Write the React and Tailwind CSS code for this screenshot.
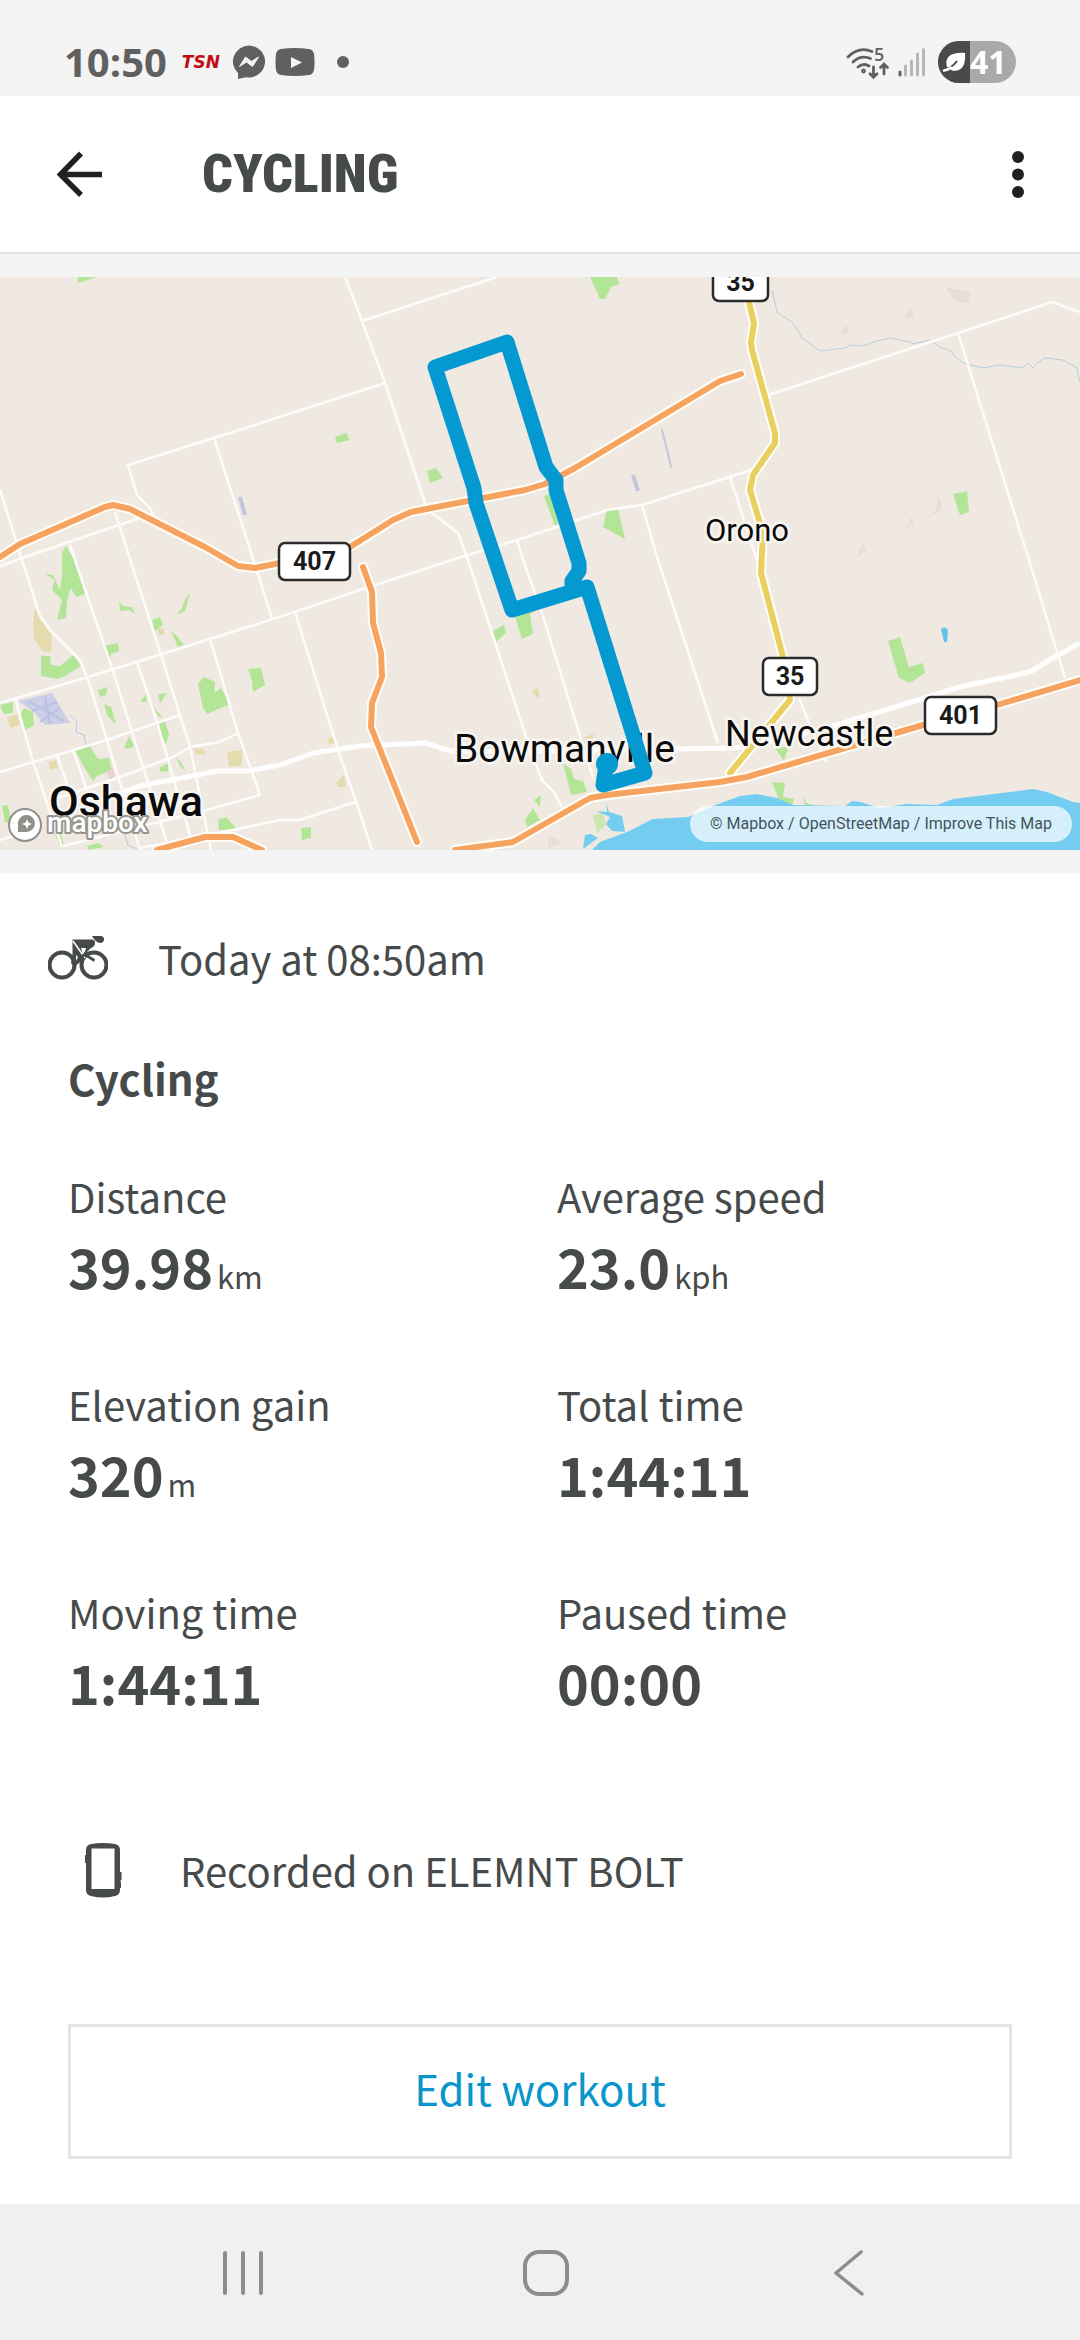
const stats = [
  { label: 'Distance', value: '39.98', unit: 'km' },
  { label: 'Average speed', value: '23.0', unit: 'kph' },
  { label: 'Elevation gain', value: '320', unit: 'm' },
  { label: 'Total time', value: '1:44:11' },
  { label: 'Moving time', value: '1:44:11' },
  { label: 'Paused time', value: '00:00' },
];

// Map data
const parks = [
  '78,277 97,277 78,283',
  '335,437 346,433 350,440 337,443',
  '590,277 617,277 619,284 611,287 605,299 600,299',
  '427,471 436,468 443,478 430,483',
  '544,496 551,494 558,524 555,526',
  '607,510 618,508 625,539 603,527',
  '953,494 967,491 969,512 960,515',
  '62,552 66,546 78,566 85,594 76,597 71,588 67,600 66,618 57,620 62,600 52,590 55,580 45,574 53,575 60,590 62,575',
  '41,656 50,656 51,665 60,666 73,655 81,666 65,676 57,679 41,676',
  '105,646 118,643 119,651 111,654 110,660 106,655',
  '152,620 160,617 163,625 155,631',
  '171,631 177,636 184,645 178,647',
  '190,592 185,600 182,608 177,615 185,611 187,604',
  '119,601 123,606 132,607 135,614 129,610 120,611',
  '248,669 261,668 265,685 253,692 252,681',
  '198,684 204,677 215,682 214,693 221,688 230,704 207,714 203,708',
  '0,705 13,702 13,713 4,714',
  '20,716 24,708 33,712 34,725 24,731',
  '98,690 108,687 106,695 100,697',
  '104,704 111,707 116,724 108,717',
  '140,702 146,694 147,702',
  '158,694 167,693 160,703',
  '150,703 163,718 159,717',
  '158,725 165,721 169,735 166,744 160,735',
  '124,748 129,736 134,746 131,748 127,749',
  '75,750 89,745 98,759 109,758 112,770 97,776 93,781 84,767',
  '159,768 168,763 168,771 161,772',
  '176,757 181,762 186,772 180,766',
  '218,820 226,817 237,829 219,830',
  '301,828 311,827 311,838 302,840',
  '2,806 8,805 12,825 5,822',
  '55,834 60,832 64,845 60,846',
  '87,846 99,843 104,847 89,850',
  '493,631 504,625 506,633 496,642',
  '515,616 538,608 530,614 533,634 522,639',
  '563,763 571,769 574,779 583,781 587,792 571,795',
  '525,820 533,808 540,820 527,827',
  '534,800 541,795 540,807',
  '888,641 900,637 909,667 923,663 925,673 910,683 899,678',
  '775,748 789,746 784,761',
  '772,782 785,783 783,797 794,799 792,806 780,803',
  '803,794 806,803 817,806 805,806',
];

const sand = [
  '35,608 40,618 52,635 51,653 42,651 34,638 33,623',
  '157,628 164,629 164,634 159,636',
  '227,752 242,750 242,765 229,767',
  '193,748 204,749 206,754 197,755',
  '49,762 56,760 58,768 50,770',
  '327,739 335,736 336,743 329,744',
  '336,783 344,775 346,787 338,787',
  '531,692 538,688 540,699',
  '584,737 594,734 592,740 586,740',
  '7,718 17,714 20,725 11,728',
];

const hills = [
  '945,287 970,292 969,303 957,302',
  '903,318 911,307 914,317',
  '841,334 846,324 849,334',
  '926,519 937,509 937,494 942,503 941,510',
  '906,528 911,517 914,523',
  '857,556 863,542 866,552',
  '548,849 549,835 563,843',
];

const minorRoads = [
  '345,277 362,321 385,383 425,503',
  '362,321 497,277',
  '385,383 214,438 128,465 137,495 150,508 154,517',
  '214,438 255,565 272,618',
  '0,490 22,560 40,616 50,630 80,660 88,680 107,740 140,850',
  '0,566 22,558 140,518',
  '115,512 132,565 161,655 190,747 211,850',
  '70,545 75,560 112,668 137,748 167,843',
  '0,703 88,677 162,654 210,639 295,612 360,590 455,559 517,540 607,510 642,505 720,480 757,468',
  '295,612 338,750 360,813 372,850',
  '210,639 238,733 260,795 207,810 63,846',
  '137,662 157,722 190,835',
  '0,772 107,740 180,715',
  '57,755 70,793',
  '15,698 33,762 62,847',
  '73,750 87,790',
  '52,800 117,778 173,757 190,747 220,742 238,733',
  '140,848 233,830 280,820 300,820 355,802',
  '0,840 20,834',
  '425,503 432,513 458,533 468,560 527,740 542,780 555,793 562,808',
  '517,540 523,560 542,613 593,778',
  '642,505 658,560 718,743',
  '768,395 958,333 1052,302 1080,312',
  '958,333 1029,560 1065,678',
  '730,477 757,560',
  '799,698 808,720 826,762',
];

const mainRoads = [
  '100,800 140,786 187,777 217,771 247,771 280,765 313,753 360,746 427,743 440,748 455,752 673,749 735,748 765,743 830,727 960,687 1030,672 1053,658 1080,643',
];

const highways = [
  '0,557 20,544 105,507 113,505 130,509 205,547 238,566 255,568 275,564 350,547 393,520 411,512 525,490 545,484 575,468 720,381 741,374',
  '363,567 372,592 373,623 381,653 382,677 372,703 371,727 417,842',
  '455,850 513,842 590,798 607,795 720,782 747,777 923,725 997,705 1080,680',
  '157,850 205,837 233,837 262,850',
];

const route35 = '746,290 754,323 751,342 752,350 775,433 775,443 753,475 750,490 763,533 761,573 783,657 790,700 730,773';

const creek = '772,290 777,312 793,323 802,338 820,351 846,348 850,345 863,346 877,341 890,338 910,342 913,344 930,340 940,347 952,352 954,356 963,363 983,368 1000,365 1022,368 1028,363 1033,368 1037,363 1045,358 1063,360 1077,368 1080,383';

const lake = '592,850 600,842 627,832 653,819 688,817 713,806 740,796 757,794 777,798 793,805 845,806 852,801 860,802 880,808 907,804 937,805 953,799 1033,789 1047,792 1073,802 1080,803 1080,850';

const track = '609,761 605,772 603,785 645,773 587,587 512,610 476,503 474,488 435,367 507,342 546,467 556,480 556,490 579,563 579,571 572,581 572,590';

const places = [
  { name: 'Oshawa', x: 49, y: 816, size: 43, weight: 500 },
  { name: 'Bowmanville', x: 454, y: 762, size: 39, weight: 400 },
  { name: 'Newcastle', x: 725, y: 746, size: 36, weight: 400 },
  { name: 'Orono', x: 705, y: 541, size: 31, weight: 400 },
];

const shields = [
  { name: '407', x: 279, y: 543, w: 71 },
  { name: '35', x: 713, y: 264, w: 55 },
  { name: '35', x: 763, y: 658, w: 54 },
  { name: '401', x: 925, y: 697, w: 71 },
];

function StatusBar() {
  return (
    <div className="flex h-24 items-center justify-between bg-[#f4f4f4] pt-7 pl-16 pr-16 text-[#606060]">
      <div className="flex items-center">
        <span className="font-['Open_Sans'] text-[40px] leading-none font-bold">10:50</span>
        <span className="ml-3 w-11 text-center font-['DejaVu_Sans',sans-serif] text-[17px] leading-none font-bold text-[#c00d14] italic">TSN</span>
        <svg className="ml-2 h-9 w-9" viewBox="0 0 36 36">
          <path d="M18 1.500A16.500 16 0 1 1 15 33.300L7 35V29A16.500 16 0 0 1 18 1.500Z" fill="currentColor" />
          <path d="M8.500 22.500 14.500 13l6 4.500 7-4.500-6 9.500-6-4.500Z" fill="#f4f4f4" stroke="#f4f4f4" strokeWidth="1" strokeLinejoin="round" />
        </svg>
        <svg className="ml-2 h-7 w-10" viewBox="0 0 40 28">
          <path d="M6 1Q20-1 34 1Q38 1.500 39 6Q40 14 39 22Q38 26.500 34 27Q20 29 6 27Q2 26.500 1 22Q0 14 1 6Q2 1.500 6 1Z" fill="currentColor" />
          <path d="M16 9v11l11-5.500Z" fill="#f4f4f4" />
        </svg>
        <span className="ml-[22px] h-3 w-3 rounded-full bg-[#606060]" />
      </div>
      <div className="flex items-center">
        <svg className="h-9 w-11 overflow-visible" viewBox="0 0 44 36" fill="none" stroke="currentColor" strokeWidth="2.800" strokeLinecap="round">
          <path d="M2 13Q13 2 26 7.500M7 18Q15 10.500 24.500 14.500M12 23Q17.500 18.500 23 22" />
          <circle cx="17.500" cy="27" r="1" />
          <path d="M27.500 23v10M24 29.800l3.500 3.500 3.500-3.500M38 30V20M34.500 23.500l3.500-3.500 3.500 3.500" />
          <text x="28" y="17" fontSize="18" fontWeight="600" fontFamily="Open Sans" fill="currentColor" stroke="none">5</text>
        </svg>
        <svg className="ml-2 h-[30px] w-7" viewBox="0 0 28 30" fill="none" stroke="#b8b8b8" strokeWidth="3" strokeLinecap="round">
          <path d="M2 25v3" stroke="#606060" />
          <path d="M7.500 19v9M13.500 14v14M19.500 7v21M25.500 2.500v25.500" />
        </svg>
        <div className="ml-3 flex h-[42px] w-[78px] items-center overflow-hidden rounded-full bg-[#a9a9a9] text-white">
          <div className="flex h-full w-8 items-center justify-end bg-[#4a4a4a] pr-1">
            <svg className="h-6 w-6" viewBox="0 0 24 24">
              <path d="M5 17C2 7 9 2 23 3C24 15 20 22 10 20.500Z" fill="currentColor" />
              <path d="M1 20Q9 19 15 11" fill="none" stroke="#4a4a4a" strokeWidth="2" />
              <path d="M2 20.500Q6 20 9 17.500" fill="none" stroke="currentColor" strokeWidth="2.500" strokeLinecap="round" />
            </svg>
          </div>
          <span className="font-['Open_Sans'] text-[32px] leading-none font-bold">41</span>
        </div>
      </div>
    </div>
  );
}

function Header() {
  return (
    <header className="flex h-[158px] items-center border-b-2 border-[#e4e4e4] bg-white px-14">
      <button type="button" aria-label="Back" className="text-[#212121]">
        <svg className="h-12 w-12" viewBox="0 0 48 48" fill="none" stroke="currentColor" strokeWidth="5.500">
          <path d="M25 3.500 4.500 24.500 25 45M5 24.500H46" />
        </svg>
      </button>
      <h1 className="ml-[98px] flex-1 font-['Roboto_Condensed','Liberation_Sans_Narrow','Roboto',sans-serif] text-[54px] leading-none font-black text-[#464a4b]">CYCLING</h1>
      <button type="button" aria-label="More options" className="text-[#212121]">
        <svg className="h-12 w-3" viewBox="0 0 12 48" fill="currentColor">
          <circle cx="6" cy="7" r="6" />
          <circle cx="6" cy="24.500" r="6" />
          <circle cx="6" cy="42" r="6" />
        </svg>
      </button>
    </header>
  );
}

function RouteMap() {
  return (
    <div className="relative">
      <svg className="block h-auto w-full" viewBox="0 277 1080 573" fill="none" strokeLinejoin="round">
        <rect y="277" width="1080" height="573" fill="#efe9e2" />
        {hills.map((p) => <polygon key={p} points={p} fill="#e6dfd5" />)}
        {sand.map((p) => <polygon key={p} points={p} fill="#e4dbaf" />)}
        {parks.map((p) => <polygon key={p} points={p} fill="#b3e597" />)}
        <polygon points="593,815 603,813 606,825 597,833" fill="#cfe5b0" />
        <polygon points="107,771 113,768 115,776 110,780" fill="#ecd0d8" />

        {/* Airport and airstrips */}
        <polygon points="18,701 52,693 70,723 45,725 34,712" fill="#ccd0e6" />
        <path d="M28 701 64 721M60 708 40 722M32 711 57 702M45 697 50 724" stroke="#b9c0e3" strokeWidth="2" />
        <path d="M240 497 245 515M633 475 638 491" stroke="#c3c5dc" strokeWidth="4" />
        <path d="M662 430 671 467 668 453Z" stroke="#c9c7dd" strokeWidth="2" />

        <polyline points={creek} stroke="#b5d0df" strokeWidth="1" />
        <path d="M70 715 77 722 76 732 84 735 86 745M123 830 128 845 137 849" stroke="#b5c8df" strokeWidth="1" />
        <polygon points={lake} fill="#74cdf1" />
        <path d="M596 811 607 812 606 803 609 812 622 816 625 832 612 831 606 824 610 817Z" fill="#74cdf1" />
        <path d="M583 849 585 835 591 834 598 838Z" fill="#74cdf1" />
        <path d="M941 629q6-4 7 3l-1 10-3 0Z" fill="#5fc4ec" />

        {minorRoads.map((p) => <polyline key={p} points={p} stroke="#fdfcfa" strokeWidth="2.500" />)}
        {mainRoads.map((p) => <polyline key={p} points={p} stroke="#fefefe" strokeWidth="5" />)}
        <g strokeLinecap="round">
          <polyline points={route35} stroke="#fffef8" strokeWidth="10" />
          <polyline points={route35} stroke="#e9cf60" strokeWidth="6" />
          {highways.map((p) => <polyline key={p} points={p} stroke="#fffef8" strokeWidth="10" />)}
          {highways.map((p) => <polyline key={p} points={p} stroke="#f7a360" strokeWidth="6" />)}
        </g>

        {places.map((place) => (
          <text
            key={place.name}
            x={place.x}
            y={place.y}
            fontSize={place.size}
            fontWeight={place.weight}
            fontFamily="Roboto, sans-serif"
            fill="#0b0b0b"
            stroke="#f8f5f1"
            strokeWidth="5"
            paintOrder="stroke"
          >
            {place.name}
          </text>
        ))}
        {shields.map((shield) => (
          <g key={`${shield.name}-${shield.x}`}>
            <rect x={shield.x} y={shield.y} width={shield.w} height="37" rx="6" fill="#fff" stroke="#2b2b2b" strokeWidth="2.500" />
            <text x={shield.x + shield.w / 2} y={shield.y + 27} textAnchor="middle" fontSize="25" fontWeight="700" fontFamily="Roboto, sans-serif" fill="#1a1a1a">{shield.name}</text>
          </g>
        ))}

        <polyline points={track} stroke="#0599d1" strokeWidth="15" strokeLinecap="round" />
        <circle cx="607" cy="764" r="11" fill="#0599d1" />

        <circle cx="25" cy="825" r="16" fill="#fff" stroke="#8f8f8b" strokeWidth="2" />
        <path d="M18 832V825A8.500 8.500 0 1 1 26 832Z" fill="#8f8f8b" />
        <path d="M27 819 28.500 822.500 32 824 28.500 825.500 27 829 25.500 825.500 22 824 25.500 822.500Z" fill="#fff" />
        <text x="47" y="832" fontSize="28" fontWeight="500" fontFamily="Roboto, sans-serif" fill="#fff" stroke="#96968f" strokeWidth="4" paintOrder="stroke">mapbox</text>
      </svg>
      <div className="absolute right-2 bottom-2 flex h-9 items-center gap-1 rounded-full bg-white/70 px-5 font-['Roboto',sans-serif] text-base leading-none text-[#45535b]">
        <a href="#mapbox">© Mapbox</a>
        <span>/</span>
        <a href="#osm">OpenStreetMap</a>
        <span>/</span>
        <a href="#improve">Improve This Map</a>
      </div>
    </div>
  );
}

function Stat({ label, value, unit }) {
  return (
    <div>
      <dt className="text-[40px] leading-[62px]">{label}</dt>
      <dd className="flex items-baseline gap-1 text-[54px] leading-[78px] font-bold">
        {value}
        {unit && <span className="text-[31px] leading-none font-normal">{unit}</span>}
      </dd>
    </div>
  );
}

function NavBar() {
  return (
    <nav className="mt-auto flex h-[136px] items-center bg-[#f0f0f3] pr-[82px] pl-[94px] text-[#8c8c8e]">
      <button type="button" aria-label="Recent apps" className="flex flex-1 justify-center">
        <svg className="h-12 w-12" viewBox="0 0 48 48" fill="none" stroke="currentColor" strokeWidth="4" strokeLinecap="round">
          <path d="M4 5v40M22 5v40M40 5v40" />
        </svg>
      </button>
      <button type="button" aria-label="Home" className="flex flex-1 justify-center">
        <svg className="h-12 w-12" viewBox="0 0 48 48" fill="none" stroke="currentColor" strokeWidth="4">
          <rect x="3" y="4" width="42" height="42" rx="14" />
        </svg>
      </button>
      <button type="button" aria-label="Back" className="flex flex-1 justify-center">
        <svg className="h-12 w-12" viewBox="0 0 48 48" fill="none" stroke="currentColor" strokeWidth="3.500" strokeLinecap="round" strokeLinejoin="round">
          <path d="M38 4 13 25 39 46" />
        </svg>
      </button>
    </nav>
  );
}

export default function App() {
  return (
    <div className="flex min-h-screen flex-col bg-white font-['Noto_Sans_CJK_JP',sans-serif] text-[#464a4b]">
      <StatusBar />
      <Header />
      <div className="bg-[#f4f4f4] py-[23px]">
        <RouteMap />
      </div>

      <main className="px-[68px]">
        <div className="-ml-5 mt-[54px] flex items-center gap-[50px]">
          <svg className="h-11 w-[60px]" viewBox="0 0 60 44" fill="none" stroke="currentColor">
            <circle cx="14" cy="29" r="12.500" strokeWidth="4" />
            <circle cx="46" cy="29" r="12.500" strokeWidth="4" />
            <path d="M24.500 3.500H44q3 0 3 3.500T43 12l-4 4 1 3 7 4-1 3-9-6-2-2 3-6h-5L35 19 36 23 26 31 23 27 24.500 20Z" fill="currentColor" stroke="none" />
            <path d="M28 19v6l2-4ZM34 13l4 0-3 6Z" fill="#fff" stroke="none" />
            <path d="M25 5 37 22" stroke="#fff" strokeWidth="1.500" />
            <path d="M27 28 37 18" strokeWidth="3" />
            <path d="M44 0h9.500q3 1 2.500 4t-4 3q-4 0-8-7Z" fill="currentColor" stroke="none" />
          </svg>
          <p className="text-[40px] leading-[62px]">Today at 08:50am</p>
        </div>

        <h2 className="mt-[58px] text-[42px] leading-[62px] font-bold">Cycling</h2>

        <dl className="mt-14 grid grid-cols-2 gap-x-[34px] gap-y-[68px]">
          {stats.map((stat) => (
            <Stat key={stat.label} {...stat} />
          ))}
        </dl>

        <div className="mt-[118px] ml-4 flex items-center gap-[58px]">
          <svg className="h-14 w-[38px]" viewBox="0 0 38 56" fill="currentColor">
            <path fillRule="evenodd" d="M2 8Q2 3 7 2Q19 0 31 2Q36 3 36 8V48Q36 53 31 54Q19 57 7 54Q2 53 2 48ZM7.500 6.500V47H30.500V6.500Z" />
            <path d="M1 13h3v8H1ZM34 30h3.500v8L36 39l1 1v6h-3Z" />
          </svg>
          <p className="text-[40px] leading-[62px]">Recorded on ELEMNT BOLT</p>
        </div>

        <button type="button" className="mt-[123px] mb-[45px] h-[135px] w-full border-3 border-[#e5e5e5] pb-2 text-[42px] leading-[62px] text-[#0a96cb]">
          Edit workout
        </button>
      </main>

      <NavBar />
    </div>
  );
}
